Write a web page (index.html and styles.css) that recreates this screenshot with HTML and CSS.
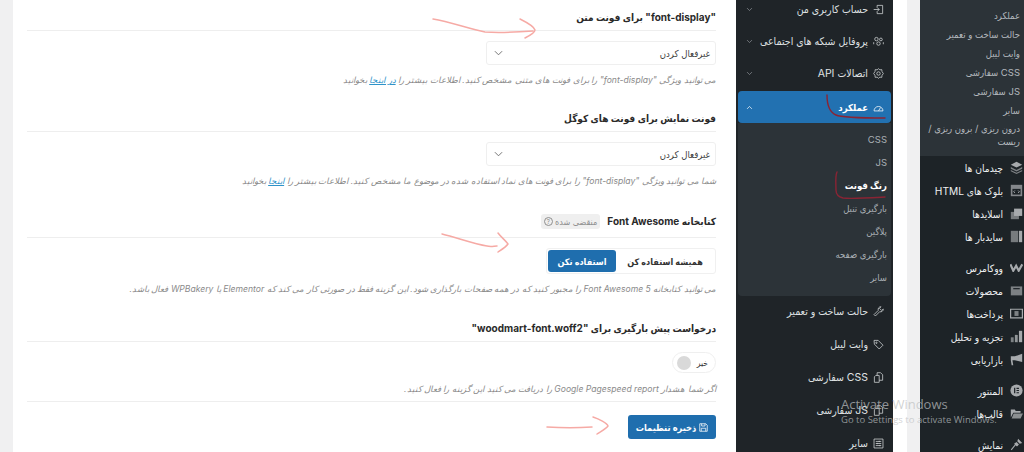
FILE: index.html
```html
<!DOCTYPE html>
<html lang="fa" dir="rtl">
<head>
<meta charset="utf-8">
<title>عملکرد</title>
<link rel="stylesheet" href="styles.css">
</head>
<body>
<div class="page">
  <nav class="wpmenu">
    <ul class="wpsub">
      <li>عملکرد</li><li>حالت ساخت و تعمیر</li><li>وایت لیبل</li><li>CSS سفارشی</li><li>JS سفارشی</li><li>سایر</li><li class="wrap">درون ریزی / برون ریزی / ریست</li>
    </ul>
    <ul class="wpmain">
      <li><svg class="wi" viewBox="0 0 16 16"><path d="M8 1 15 4.500 8 8 1 4.500Z"/><path d="M1 7.500 8 11l7-3.500v2L8 13 1 9.500ZM1 11l7 3.500 7-3.500v1.500L8 16l-7-3.500Z" opacity=".7"/></svg>چیدمان ها</li>
      <li><svg class="wi" viewBox="0 0 16 16"><path d="M1 1h14v14H1Z" opacity=".75"/><path d="M3 6h10v7H3Z" fill="#1d2327"/><path d="M6 8 4.500 9.500 6 11M10 8l1.500 1.500L10 11" fill="none" stroke="#c3c4c7"/></svg>بلوک های HTML</li>
      <li><svg class="wi" viewBox="0 0 16 16"><path d="M5 2h10v9H5Z"/><path d="M1 6h10v9H1Z" opacity=".65"/></svg>اسلایدها</li>
      <li><svg class="wi" viewBox="0 0 16 16"><path d="M1 1h9v14H1Z" opacity=".65"/><path d="M11 1h4v14h-4Z"/></svg>سایدبار ها</li>
      <li class="gap"><svg class="wi wide" viewBox="0 0 18 12"><path d="M.5 1.500 4.500 10.500 8.500 3.500 12 10.500 17 1.500" fill="none" stroke="#a7aaad" stroke-width="3"/></svg>ووکامرس</li>
      <li><svg class="wi" viewBox="0 0 16 16"><path d="M1 3h14v11H1Z" opacity=".7"/><path d="M4 5h8v1.500H4Z" fill="#1d2327"/></svg>محصولات</li>
      <li><svg class="wi" viewBox="0 0 16 16"><path fill-rule="evenodd" d="M0 2h16v12H0Zm1.500 1.500v9h13v-9Z"/><path d="M5.500 5h5v6h-5Z" opacity=".7"/></svg>پرداخت‌ها</li>
      <li><svg class="wi" viewBox="0 0 16 16"><path d="M1 9h3.500v6H1Z" opacity=".7"/><path d="M6 6h3.500v9H6Z" opacity=".85"/><path d="M11 1h4v14h-4Z"/></svg>تجزیه و تحلیل</li>
      <li><svg class="wi" viewBox="0 0 16 16"><path d="M15 1v10L6 9H3l1 6H2L1 9V4h5Z"/></svg>بازاریابی</li>
      <li class="gap"><svg class="wi" viewBox="0 0 16 16"><circle cx="8" cy="8" r="7.500"/><path d="M5 4.500h1.500v7H5ZM8 4.500h3V6H8Zm0 2.800h3v1.400H8ZM8 10h3v1.500H8Z" fill="#1d2327"/></svg>المنتور</li>
      <li><svg class="wi" viewBox="0 0 16 16"><path d="M1 3h5l1 2h6v2H4L1 13Z"/><path d="M4.500 8H16l-3 6H2Z" opacity=".8"/></svg>قالب‌ها</li>
      <li class="gap"><svg class="wi" viewBox="0 0 16 16"><path d="M10 1l5 5-3 1-3-3ZM8 5l3 3-2 2H8L7 9l-5 6-1-1 5-6-1-1Z"/></svg>نمایش</li>
    </ul>
  </nav>
  <div class="gutter"></div>
  <div class="blank"></div>

  <aside class="side">
    <ul class="sidelist first">
      <li class="item"><svg class="ic" viewBox="0 0 16 16"><path d="M6 2h8v12H6M6 5V2M6 14v-3M1 8h8M6 5l3 3-3 3"/></svg>حساب کاربری من<svg class="chev" viewBox="0 0 10 6"><path d="M1.500 1 5 4.500 8.500 1"/></svg></li>
      <li class="item"><svg class="ic" viewBox="0 0 16 16"><circle cx="5" cy="4.500" r="2.500"/><circle cx="11.500" cy="5" r="2"/><circle cx="8" cy="11" r="2.500"/><path d="M1 9v3M15 9v3"/></svg>پروفایل شبکه های اجتماعی<svg class="chev" viewBox="0 0 10 6"><path d="M1.500 1 5 4.500 8.500 1"/></svg></li>
      <li class="item"><svg class="ic" viewBox="0 0 16 16"><circle cx="8" cy="8" r="2.500"/><path d="M8 1l2 1.700 2.800-.3.300 2.800L15 8l-1.900 2.800-.3 2.800-2.800-.3L8 15l-2-1.700-2.800.3-.3-2.800L1 8l1.900-2.800.3-2.800 2.800.3Z"/></svg>اتصالات API<svg class="chev" viewBox="0 0 10 6"><path d="M1.500 1 5 4.500 8.500 1"/></svg></li>
      <li class="item active"><svg class="ic" viewBox="0 0 16 16"><path d="M1.500 13a6.500 6.500 0 1 1 13 0ZM8 13l3-5"/></svg>عملکرد<svg class="chev" viewBox="0 0 10 6"><path d="M1.500 5 5 1.500 8.500 5"/></svg></li>
    </ul>
    <ul class="submenu">
      <li>CSS</li><li>JS</li><li class="on">رنگ فونت</li><li>بارگیری تنبل</li><li>پلاگین</li><li>بارگیری صفحه</li><li>سایر</li>
    </ul>
    <ul class="sidelist lower">
      <li class="item"><svg class="ic" viewBox="0 0 16 16"><path d="M15 4.500a4 4 0 0 1-5.300 3.800L3.500 14.500 1.500 12.500 7.700 6.300A4 4 0 0 1 11.500 1L9.500 3.500l3 3Z"/></svg>حالت ساخت و تعمیر</li>
      <li class="item"><svg class="ic" viewBox="0 0 16 16"><path d="M1.500 2h6l7 7-5.500 5.500-7-7Z"/><circle cx="5" cy="5.500" r="1"/></svg>وایت لیبل</li>
      <li class="item"><svg class="ic" viewBox="0 0 16 16"><path d="M6 1h5l3 3v8H9M6 1v4M4 5h5v10H2V7Z"/></svg>CSS سفارشی</li>
      <li class="item"><svg class="ic" viewBox="0 0 16 16"><path d="M6 1h5l3 3v8H9M6 1v4M4 5h5v10H2V7Z"/></svg>JS سفارشی</li>
      <li class="item"><svg class="ic" viewBox="0 0 16 16"><path d="M1.500 1.500h13v13h-13ZM4 5h8M4 8h8M4 11h8M9 4v2M6 7v2M10 10v2"/></svg>سایر</li>
    </ul>
  </aside>

  <main class="main">
    <section class="sec">
      <h2 class="title">"font-display" برای فونت متن</h2>
      <div class="select"><span>غیرفعال کردن</span><svg class="selchev" viewBox="0 0 10 6"><path d="M1 1l4 4 4-4"/></svg></div>
      <p class="desc">می توانید ویژگی <i>"font-display"</i> را برای فونت های متنی مشخص کنید. اطلاعات بیشتر را <a href="#">در اینجا</a> بخوانید</p>
    </section>
    <section class="sec">
      <h2 class="title">فونت نمایش برای فونت های کوگل</h2>
      <div class="select"><span>غیرفعال کردن</span><svg class="selchev" viewBox="0 0 10 6"><path d="M1 1l4 4 4-4"/></svg></div>
      <p class="desc">شما می توانید ویژگی <i>"font-display"</i> را برای فونت های نماد استفاده شده در موضوع ما مشخص کنید. اطلاعات بیشتر را <a href="#">اینجا</a> بخوانید</p>
    </section>
    <section class="sec sec-wide">
      <h2 class="title badged">کتابخانه Font Awesome<span class="badge">منقضی شده<span class="q">?</span></span></h2>
      <div class="group"><span class="seg">همیشه استفاده کن</span><span class="seg sel">استفاده نکن</span></div>
      <p class="desc">می توانید کتابخانه Font Awesome 5 را مجبور کنید که در همه صفحات بارگذاری شود. این گزینه فقط در صورتی کار می کند که Elementor یا WPBakery فعال باشد.</p>
    </section>
    <section class="sec">
      <h2 class="title">درخواست پیش بارگیری برای "woodmart-font.woff2"</h2>
      <div class="toggle"><span>خیر</span><span class="knob"></span></div>
      <p class="desc tight">اگر شما هشدار Google Pagespeed report را دریافت می کنید این گزینه را فعال کنید.</p>
    </section>
    <div class="savebar">
      <button class="save" type="button"><svg viewBox="0 0 12 12"><path d="M1 1h8l2 2v8H1ZM3.500 1v3h4.500V1M3 11V7h6v4"/></svg>ذخیره تنظیمات</button>
    </div>
  </main>
</div>

<svg class="marks" viewBox="0 0 1024 452" fill="none" stroke-linecap="round" stroke-linejoin="round">
  <g stroke="#f6aaa5" stroke-width="1.500">
    <path d="M433 19c18 3 36 10 52 13 14 1 34 0 48-1M520 19c6 3 14 7 15 11 0 3-6 6-10 8"/>
    <path d="M442 234c16 4 32 10 45 12 4 1 7 0 10 0M498 233c3 4 8 8 10 11-2 3-7 6-10 8"/>
    <path d="M547 427c16 1 30 1 45 0M593 417c6 2 14 6 15 9-2 3-8 6-11 8"/>
  </g>
  <g stroke="#8a2434" stroke-width="1.400">
    <path d="M827 95c0 10 2 17 9 20 6 3 34 3 49 3"/>
    <path d="M837 172c-2 4-1 13-1 18 0 5 3 7 7 8 8 1 24 0 42-1"/>
  </g>
</svg>
<div class="activate"><div class="a1">Activate Windows</div><div class="a2">Go to Settings to activate Windows.</div></div>
</body>
</html>
```
FILE: styles.css
```css
* { box-sizing: border-box; }
html, body { margin: 0; padding: 0; height: 452px; overflow: hidden; background: #f0f0f1; }
body { font-family: Inter, "DejaVu Sans Condensed", "DejaVu Sans", sans-serif; position: relative; }
ul { list-style: none; margin: 0; padding: 0; }

.page { display: flex; width: 1024px; height: 452px; overflow: hidden; }

/* far-right WordPress menu */
.wpmenu { flex: 0 0 104px; background: #1d2327; color: #f0f0f1; }
.wpsub { background: #2c3338; padding: 6px 4px 7px 4px; height: 156px; color: #b4b9be; font-size: 9.500px; }
.wpsub li { height: 19px; line-height: 19px; white-space: nowrap; }
.wpsub .wrap { height: auto; line-height: 13px; padding-top: 2px; white-space: normal; }
.wpmain li { height: 23px; display: flex; align-items: center; gap: 7px; font-size: 10.200px; padding-right: 1px; white-space: nowrap; color: #eef0f1; }
.wpmain .gap { margin-top: 8px; }
.wi { width: 13px; height: 13px; flex: none; fill: #a7aaad; }
.wi.wide { height: 9px; }

.gutter { flex: 0 0 13px; background: #f0f0f1; }
.blank { flex: 0 0 14px; background: #fff; }

/* plugin side navigation */
.side { flex: 0 0 157px; background: #1f2428; padding: 0 2px; color: #dfe1e3; font-size: 10.500px; overflow: hidden; }
.sidelist.first { margin-top: -7px; }
.sidelist.lower { margin-top: -1px; }
.item { height: 33px; display: flex; align-items: center; gap: 5px; padding: 0 7px; white-space: nowrap; position: relative; }
.sidelist.first .item { height: 32px; }
.sidelist.first .item.active { height: 32px; margin-top: 2px; background: #2271b1; color: #fff; border-radius: 4px; font-weight: 700; font-size: 9.500px; }
.ic { width: 11px; height: 11px; flex: none; fill: none; stroke: #d5d8da; stroke-width: 1.100; }
.chev { width: 7px; height: 5px; fill: none; stroke: #8f9499; stroke-width: 1; position: absolute; left: 8px; top: 50%; margin-top: -2px; }
.active .chev { stroke: #fff; }
.active .ic { stroke: #fff; }
.submenu { background: #2c3338; border-radius: 0 0 4px 4px; padding: 5px 4px 7px; height: 173px; font-size: 9.500px; color: #aab0b5; }
.submenu li { height: 23px; line-height: 23px; }
.submenu .on { color: #fff; font-weight: 700; }

/* main settings panel */
.main { flex: 0 0 723px; margin-left: 13px; background: #fff; padding: 9px 20px 0 14px; color: #242424; }
.sec { margin-bottom: 22px; }
.sec-wide { margin-bottom: 23px; }
.title { margin: 0; padding-bottom: 5px; border-bottom: 1px solid #eeeeee; font-size: 10px; line-height: 16px; font-weight: 700; color: #2a2a2a; box-sizing: content-box; height: 16px; }
.title.badged { display: flex; align-items: center; gap: 7px; height: 21px; line-height: 21px; }
.badge { display: inline-flex; align-items: center; gap: 2px; height: 15px; padding: 0 3px; font-size: 9px; font-weight: 400; color: #8f8f8f; background: #efefef; border-radius: 3px; }
.q { width: 9px; height: 9px; border: 1px solid #8f8f8f; border-radius: 50%; font-size: 6px; line-height: 7px; text-align: center; }
.select { width: 230px; height: 24px; margin-top: 10px; border: 1px solid #efefef; border-radius: 3px; display: flex; align-items: center; justify-content: space-between; padding: 0 5px 0 7px; font-size: 9.500px; color: #3d3d3d; }
.selchev { width: 9px; height: 6px; fill: none; stroke: #666; stroke-width: 1; }
.desc { margin: 7px 0 0; height: 16px; line-height: 16px; font-size: 8.600px; font-style: italic; color: #8a8a8a; white-space: nowrap; }
.desc.tight { margin-top: 8px; }
.desc i { font-style: italic; }
.desc a { color: #2e93c9; text-decoration: underline; }
.group { width: 170px; height: 26px; margin-top: 10px; border: 1px solid #f0f0f0; border-radius: 3px; padding: 1px; display: flex; align-items: stretch; font-size: 9px; font-weight: 700; }
.seg { display: flex; align-items: center; justify-content: center; flex: 1; color: #333; }
.seg.sel { flex: 0 0 68px; background: #1f6eae; color: #fff; border-radius: 3px; }
.toggle { width: 44px; height: 21px; margin-top: 10px; border: 1px solid #efefef; border-radius: 11px; display: flex; align-items: center; justify-content: space-between; padding: 0 7px 0 4px; font-size: 8.500px; color: #333; }
.knob { width: 14px; height: 14px; border-radius: 50%; background: #d9d9d9; }
.savebar { border-top: 1px solid #eeeeee; margin-top: -18px; padding-top: 13px; }
.save { width: 88px; height: 24px; border: 0; border-radius: 3px; background: #1f6eae; color: #fff; font: 700 9.200px Inter, "DejaVu Sans Condensed", sans-serif; display: flex; align-items: center; justify-content: center; gap: 3px; padding: 0; }
.save svg { width: 9px; height: 9px; fill: none; stroke: #fff; stroke-width: 1; }

/* overlays */
.marks { position: absolute; left: 0; top: 0; width: 1024px; height: 452px; pointer-events: none; }
.activate { position: absolute; left: 841px; top: 396px; direction: ltr; font-family: "Open Sans", sans-serif; color: rgba(190,192,194,.72); white-space: nowrap; pointer-events: none; }
.a1 { font-size: 13px; line-height: 17px; }
.a2 { font-size: 9.500px; line-height: 14px; }
```
